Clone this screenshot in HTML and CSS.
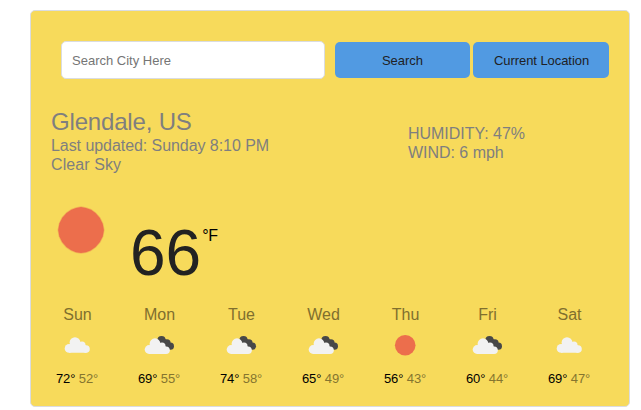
FILE: index.html
```html
<!DOCTYPE html>
<html lang="en">
<head>
<meta charset="utf-8">
<title>Weather</title>
<link rel="stylesheet" href="styles.css">
</head>
<body>
<svg class="sprites" width="0" height="0" aria-hidden="true">
  <symbol id="cloud" viewBox="0 0 50 40">
    <g class="cloud-light"><circle cx="17.1" cy="23.4" r="4.4"/><circle cx="23" cy="17.6" r="5.4"/><circle cx="30" cy="19.9" r="3.5"/><circle cx="34" cy="24.1" r="3.8"/><path d="M17 27.8v-8l11-2 4 1 2 2v7z"/></g>
  </symbol>
  <symbol id="clouds" viewBox="0 0 50 40">
    <g class="cloud-dark"><circle cx="27.5" cy="15" r="4.1"/><circle cx="32.9" cy="18" r="3.7"/><circle cx="36.4" cy="21.2" r="3.6"/><path d="M26 14l4-1 8 7v4h-7l-5-5z"/></g>
    <g class="cloud-light"><circle cx="15.1" cy="24.5" r="4.4"/><circle cx="21" cy="18.7" r="5.4"/><circle cx="28" cy="21" r="3.5"/><circle cx="32" cy="25.2" r="3.8"/><path d="M15 28.9v-8l11-2 4 1 2 2v7z"/></g>
  </symbol>
  <symbol id="sun" viewBox="0 0 50 40"><circle class="sun-disc" cx="25.2" cy="20.2" r="10.3"/></symbol>
</svg>
<main class="card">
  <form class="search">
    <input class="field" type="text" placeholder="Search City Here">
    <button class="btn btn-search" type="button">Search</button>
    <button class="btn btn-location" type="button">Current Location</button>
  </form>
  <section class="overview">
    <div class="place">
      <h1>Glendale, US</h1>
      <p>Last updated: Sunday 8:10 PM</p>
      <p>Clear Sky</p>
    </div>
    <div class="details">
      <p>HUMIDITY: 47%</p>
      <p>WIND: 6 mph</p>
    </div>
  </section>
  <section class="current">
    <svg class="current-icon" viewBox="0 0 50 50"><path class="sun-disc sun-edge" d="M25 2l5 1 5 1.7 4.5 3.2 4.2 4.8 3 6 1.2 6.3-1.1 6.3-2.9 5.8-4.3 4.9-5 3.5-4.6 1.7-5 .9-5-.9-4.8-1.9-4.8-3.2-4.3-5-2.8-5.8-1.1-6.3 1.2-6.4 2.9-5.9 4.2-4.7 4.8-3.3 4.7-1.7z"/></svg>
    <span class="temperature">66</span>
    <span class="unit">°F</span>
  </section>
  <section class="forecast">
    <div class="day"><h2>Sun</h2><svg><use href="#cloud"/></svg><p>72° <span>52°</span></p></div>
    <div class="day"><h2>Mon</h2><svg><use href="#clouds"/></svg><p>69° <span>55°</span></p></div>
    <div class="day"><h2>Tue</h2><svg><use href="#clouds"/></svg><p>74° <span>58°</span></p></div>
    <div class="day"><h2>Wed</h2><svg><use href="#clouds"/></svg><p>65° <span>49°</span></p></div>
    <div class="day"><h2>Thu</h2><svg><use href="#sun"/></svg><p>56° <span>43°</span></p></div>
    <div class="day"><h2>Fri</h2><svg><use href="#clouds"/></svg><p>60° <span>44°</span></p></div>
    <div class="day"><h2>Sat</h2><svg><use href="#cloud"/></svg><p>69° <span>47°</span></p></div>
  </section>
</main>
</body>
</html>
```
FILE: styles.css
```css
* { box-sizing: border-box; }
body {
  margin: 0;
  padding: 10px 0 0 30px;
  background: #fff;
  font-family: "Liberation Sans", Arial, sans-serif;
  overflow: hidden;
}
h1, h2, p { margin: 0; font-weight: 400; }
.sprites { display: block; }
.card {
  width: 600px;
  height: 397px;
  background: #f7da5b;
  border: 1px solid #dadce0;
  border-radius: 5px;
  padding: 30px 20px 0;
}
.search {
  display: flex;
  align-items: center;
  padding-left: 10px;
}
.field {
  width: 264px;
  height: 38px;
  margin-right: 10px;
  padding: 0 10px;
  border: 1px solid #dadce0;
  border-radius: 5px;
  background: #fff;
  font: 13px "Liberation Sans", Arial, sans-serif;
}
.field::placeholder { color: #757575; }
.btn {
  height: 36px;
  padding: 0;
  border: 0;
  border-radius: 5px;
  background: #519ae2;
  color: #202124;
  font: 13px "Liberation Sans", Arial, sans-serif;
}
.btn-search { width: 135px; margin-right: 3px; }
.btn-location { width: 136px; padding-left: 1px; letter-spacing: -0.06px; }
.overview {
  display: grid;
  grid-template-columns: 357px 1fr;
  align-items: center;
  padding-top: 29px;
  color: #7f7f7f;
  font-size: 16px;
  line-height: 19px;
}
.overview h1 { font-size: 24px; line-height: 28px; letter-spacing: -0.17px; }
.place p { letter-spacing: -0.06px; }
.place p:last-child { letter-spacing: 0.08px; }
.details { padding-top: 4px; }
.details p { letter-spacing: -0.03px; }
.current {
  display: flex;
  align-items: flex-start;
  height: 132px;
  padding-top: 31px;
}
.current-icon { width: 50px; height: 50px; margin: 0 0 0 5px; }
.temperature {
  margin: 12px 0 0 24px;
  font-size: 64px;
  line-height: 73px;
  color: #222;
}
.unit { margin: 22px 0 0 1px; font-size: 16px; line-height: 18px; color: #000; letter-spacing: -0.3px; }
.forecast {
  display: grid;
  grid-template-columns: repeat(7, 82px);
  margin: 0 -15px;
  text-align: center;
}
.day h2 { padding-left: 1px; font-size: 16px; line-height: 18px; color: #806f2e; }
.day svg { display: block; width: 50px; height: 40px; margin: 1px auto 5px; }
.day p { font-size: 13px; line-height: 18px; color: #000; letter-spacing: -0.1px; }
.day span { color: #85752f; }
.cloud-light { fill: #f2f2f2; }
.cloud-dark { fill: #484848; }
.sun-disc { fill: #ec6e4c; }
.sun-edge { stroke: #ec6e4c; stroke-width: 1.4; stroke-opacity: 0.35; }
```
